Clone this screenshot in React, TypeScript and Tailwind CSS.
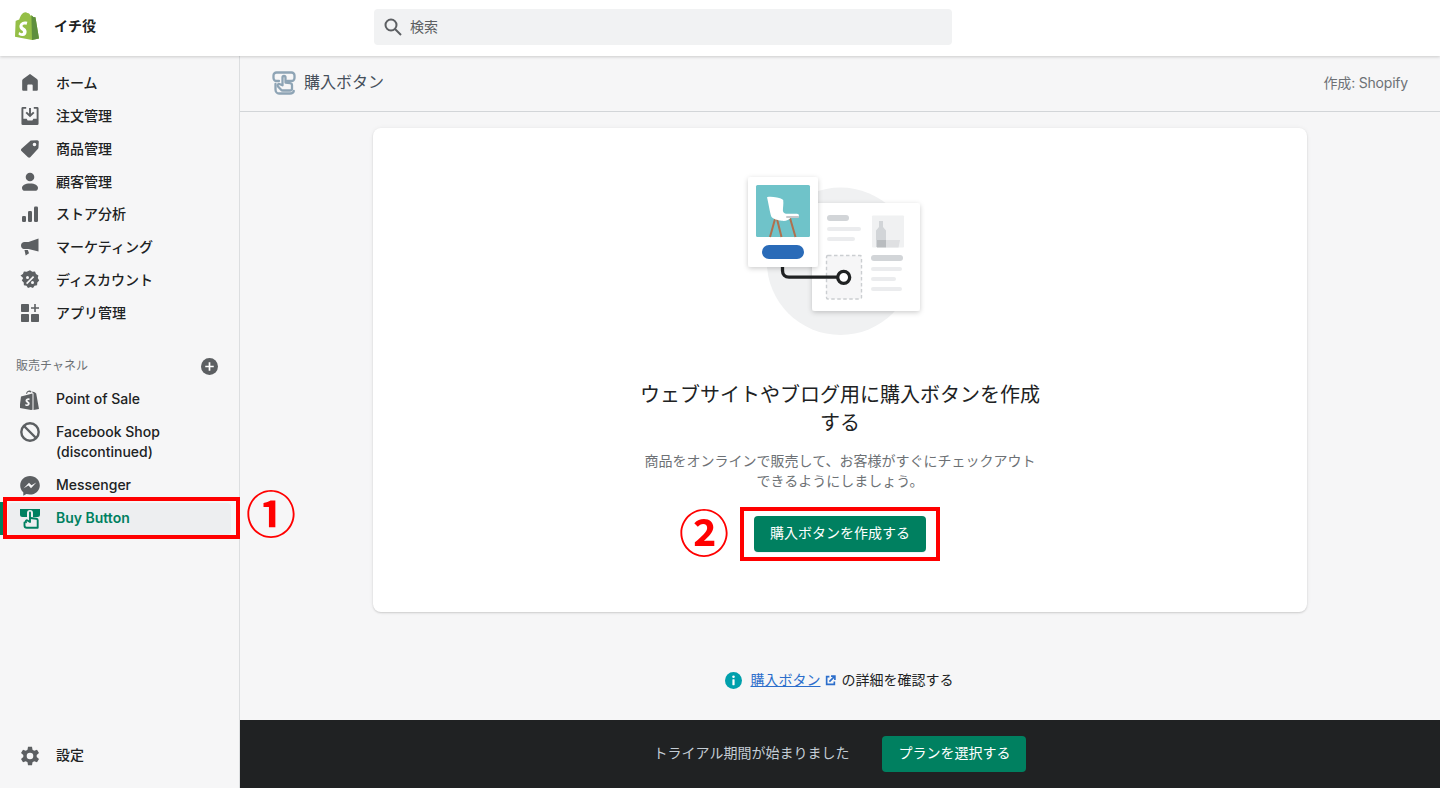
import React from 'react';

const font = { fontFamily: '"Inter", "Noto Sans CJK JP", sans-serif' };

const Icon: React.FC<{ children: React.ReactNode; className?: string }> = ({ children, className }) => (
    <svg viewBox="0 0 20 20" className={className ?? 'w-5 h-5 fill-[#5c5f62]'}>
        {children}
    </svg>
);

const HomeIcon = () => (
    <Icon><path transform="translate(1 .5) scale(.9)" d="M10 .8c-.5 0-.9.2-1.200.5L2.300 6.200C1.500 6.800 1.300 7.500 1.300 8.400V18a1.200 1.200 0 0 0 1.200 1.200H7v-6a1 1 0 0 1 1-1h4a1 1 0 0 1 1 1v6h4.500a1.200 1.200 0 0 0 1.200-1.200V8.400c0-.9-.2-1.600-1-2.200l-6.500-4.900C10.900 1 10.500.8 10 .8z" /></Icon>
);
const OrdersIcon = () => (
    <Icon><g transform="translate(.5 1) scale(.95 .9)"><path fillRule="evenodd" d="M1 1.500A1.500 1.500 0 0 1 2.500 0H6v2H3v11h3.500l1 2h5l1-2H17V2h-3V0h3.500A1.500 1.500 0 0 1 19 1.500v17a1.500 1.500 0 0 1-1.500 1.500h-15A1.500 1.500 0 0 1 1 18.500v-17z" /><path d="M9 1h2v6.600l2.300-2.300 1.400 1.400L10 11.400 5.300 6.700l1.400-1.400L9 7.600V1z" /></g></Icon>
);
const TagIcon = () => (
    <Icon><path transform="translate(1 1) scale(.9)" fillRule="evenodd" d="M11.300.6 18 .2c1 0 1.800.8 1.800 1.800l-.4 6.700c0 .4-.2.800-.5 1.100l-8.600 9.500c-.7.700-1.800.7-2.500 0L.5 12.100c-.7-.7-.7-1.800 0-2.500L10.200 1.100c.3-.3.700-.5 1.100-.5zM15 7a2 2 0 1 0 0-4 2 2 0 0 0 0 4z" /></Icon>
);
const CustomerIcon = () => (
    <Icon><circle cx="10" cy="5" r="4.300" /><path d="M10 11.500c-5 0-8 1.800-8 4.500 0 2 1.500 2.800 3 2.800h10c1.500 0 3-.8 3-2.800 0-2.700-3-4.500-8-4.500z" /></Icon>
);
const AnalyticsIcon = () => (
    <Icon><rect x="2" y="12" width="4" height="6" rx="1.200" /><rect x="8" y="7" width="4" height="11" rx="1.200" /><rect x="14" y="2.500" width="4" height="15.500" rx="1.200" /></Icon>
);
const MarketingIcon = () => (
    <Icon><path d="M18.500 1.500v13l-10-2.500H4l-.1.100C2.500 12 1 10.500 1 8.500 1 6.500 2.500 5 4.500 5h4l10-3.500z" /><path d="M4.500 13h3.300l1.200 3.200-3.300 2.300L4.500 13z" /></Icon>
);
const DiscountIcon = () => (
    <Icon><path fillRule="evenodd" d="M10 .3l2.300 1.500 2.700-.2 1 2.500 2.400 1.400-.6 2.600 1.400 2.400-1.900 2-.2 2.700-2.600.6-1.500 2.300-2.500-1-2.500 1-1.500-2.300-2.600-.6-.2-2.700-1.900-2 1.400-2.400L.5 5.500l2.400-1.400 1-2.500 2.800.2L10 .3zM7.500 9a1.500 1.500 0 1 0 0-3 1.500 1.500 0 0 0 0 3zm5 5a1.500 1.500 0 1 0 0-3 1.500 1.500 0 0 0 0 3zM13 6l-7 7 1.200 1.200 7-7L13 6z" /></Icon>
);
const AppsIcon = () => (
    <Icon><rect x="1" y="1" width="8" height="8" rx=".8" /><rect x="1" y="11" width="8" height="8" rx=".8" /><rect x="11" y="11" width="8" height="8" rx=".8" /><path d="M14.200 1h1.600v3.200H19v1.600h-3.200V9h-1.600V5.800H11V4.200h3.200V1z" /></Icon>
);
const PosIcon = () => (
    <Icon><path fillRule="evenodd" d="M11.500 1.500 14 2l1 .5 1.200 1L19 19l-5.500 1V3.500l-2-2zM12.500 3.500 1 6.500-.5 18l11.500 2 1.500-.3V3.500zM6 3.500C6.500 1.500 8 .5 9.500.5c1 0 1.700.6 2 1.500L10 2.500c-.3-.6-.5-.8-1-.8-.9 0-1.700.8-2 2.300L6 3.500zM8.500 8.200c-1.800 0-3 1.200-3 2.600 0 1.800 2.300 2 2.300 3 0 .4-.3.700-.8.700-.7 0-1.400-.6-1.400-.6l-.4 1.300s.7.800 2 .8c1.500 0 2.500-1 2.500-2.400 0-1.900-2.300-2.100-2.300-3 0-.2.200-.6.800-.6.600 0 1.100.3 1.100.3l.4-1.800s-.4-.3-1.200-.3z" /></Icon>
);
const BanIcon = () => (
    <svg viewBox="0 0 20 20" className="w-5 h-5 fill-none stroke-[#5c5f62]" strokeWidth="2.400">
        <circle cx="10" cy="10" r="8.700" />
        <path d="M4 4l12 12" />
    </svg>
);
const MessengerIcon = () => (
    <Icon><path fillRule="evenodd" d="M10 0C4.500 0 .2 4 .2 9.400c0 2.800 1.200 5.200 3.100 6.900v3.400l3.100-1.700c1.100.3 2.300.5 3.600.5 5.500 0 9.800-4 9.800-9.100C19.800 4 15.500 0 10 0zm1 12.200-2.500-2.600-4.800 2.700 5.300-5.600 2.500 2.600 4.800-2.700-5.300 5.600z" /></Icon>
);
const BuyIcon = () => (
    <svg viewBox="0 0 20 20" className="w-5 h-5">
        <path className="fill-[#008060]" d="M0 0h20v5.500A2.500 2.500 0 0 1 17.500 8H13V4a3 3 0 0 0-6 0v4H2.500A2.500 2.500 0 0 1 0 5.500V0z" />
        <path className="fill-none stroke-[#008060]" strokeWidth="1.900" strokeLinecap="round" strokeLinejoin="round" d="M10 3.500V13L7.500 11.500c-1-.6-2.300.6-1.500 1.700" />
        <path className="fill-none stroke-[#008060]" strokeWidth="1.900" strokeLinecap="round" strokeLinejoin="round" d="M4.500 13.500v3c0 1.200.8 2.300 2.300 2.300h10.900V11.200c0-.8-.5-1.300-1.300-1.400L10.500 9" />
    </svg>
);
const GearIcon = () => (
    <Icon><path fillRule="evenodd" d="M8 0h4l.5 3 1.700 1 2.800-1.100 2 3.400-2.300 1.900v2l2.300 1.900-2 3.400-2.800-1.100-1.700 1-.5 3h-4l-.5-3-1.700-1L3 15.500l-2-3.400 2.300-1.900v-2L1 6.300l2-3.400 2.800 1.100 1.700-1L8 0zm2 12.500a3.300 3.300 0 1 0 0-6.600 3.300 3.300 0 0 0 0 6.600z" transform="translate(0 .8)" /></Icon>
);

const ShopifyLogo = () => (
    <svg viewBox="0 0 24 28" className="w-6 h-7 shrink-0">
        <path fill="#95bf47" d="M20.500 5.400c0-.1-.1-.2-.2-.2l-2-.1-1.500-1.500c-.1-.1-.4-.1-.5 0l-.8.200C15 2.300 14 1 12.400 1h-.2C11.800.4 11.200.2 10.700.2 6.800.2 4.900 5.100 4.300 7.600l-2.700.8c-.8.300-.9.300-1 1.100L0 24.800l17 3.200 7-1.500L20.500 5.400z" />
        <path fill="#5e8e3e" d="M20.300 5.200l-2-.1-1.500-1.500-.4-.1L17 28l7-1.500L20.500 5.400c0-.1-.1-.2-.2-.2z" />
        <path fill="#fff" d="M12.400 9.700l-.9 3.300s-1-.5-2.200-.4c-1.700.1-1.800 1.200-1.800 1.500.1 1.500 3.900 1.800 4.100 5.300.2 2.700-1.400 4.600-3.800 4.700-2.800.2-4.300-1.500-4.300-1.500l.6-2.500s1.500 1.200 2.800 1.100c.8 0 1.100-.7 1.100-1.200-.1-1.900-3.300-1.800-3.500-5-.2-2.700 1.600-5.400 5.400-5.600 1.500-.1 2.500.3 2.500.3z" />
    </svg>
);

const PlusCircle = () => (
    <svg viewBox="0 0 20 20" className="w-[17px] h-[17px] -mr-px">
        <circle cx="10" cy="10" r="10" fill="#5c5f62" />
        <path d="M9 5h2v4h4v2h-4v4H9v-4H5V9h4V5z" fill="#fff" />
    </svg>
);

const InfoIcon = () => (
    <svg viewBox="0 0 20 20" className="w-[17px] h-[17px]">
        <circle cx="10" cy="10" r="10" fill="#00a0ac" />
        <circle cx="10" cy="5.500" r="1.500" fill="#fff" />
        <rect x="8.700" y="8.500" width="2.600" height="7" rx=".5" fill="#fff" />
    </svg>
);

const ExternalIcon = () => (
    <svg viewBox="0 0 20 20" className="w-[11px] h-[11px] fill-none stroke-[#2c6ecb]" strokeWidth="3">
        <path d="M8 3H3v14h14v-5" />
        <path d="M8 12 17 3M11 2h7v7" />
    </svg>
);

const HeaderIcon = () => (
    <svg viewBox="0 0 24 24" className="w-6 h-6 fill-none stroke-[#8ea4b5]" strokeWidth="2.300" strokeLinecap="round" strokeLinejoin="round">
        <path d="M7 10H4.500a3 3 0 0 1-3-3V4.500a3 3 0 0 1 3-3h15a3 3 0 0 1 3 3V7a3 3 0 0 1-3 3H15" />
        <path d="M10.500 6.500a1.500 1.500 0 0 1 3 0v5l4.500.6c1.300.2 2 1 2 2.200v3.200c0 1.300-.8 2-2 2H10.800c-.7 0-1.300-.3-1.700-.8L6 15.500c-1-1.300.3-3 2-2.300l2.500 1V6.500z" />
        <path d="M3.500 13v5.500c0 2.300 1.500 4 3.500 4h11c2 0 3.500-.8 3.800-2.500" />
    </svg>
);

const Illustration = () => (
    <svg viewBox="730 165 220 180" className="w-[220px] h-[180px]">
        <defs>
            <filter id="soft" x="-20%" y="-20%" width="140%" height="140%">
                <feDropShadow dx="0" dy="1.500" stdDeviation="2.500" floodColor="#000" floodOpacity="0.2" />
            </filter>
        </defs>
        <circle cx="840.500" cy="261.300" r="73.700" fill="#f0f1f2" />
        <rect x="812" y="203" width="108" height="108" rx="3" fill="#fff" filter="url(#soft)" />
        <rect x="827" y="215" width="22" height="6" rx="3" fill="#d2d5d8" />
        <rect x="827" y="227" width="34" height="4" rx="2" fill="#ebecee" />
        <rect x="827" y="237" width="28" height="4" rx="2" fill="#ebecee" />
        <rect x="872" y="215.500" width="32" height="32" rx="1" fill="#f0f1f2" />
        <path d="M879 221h4v6l3 3.500V247h-10v-16.500l3-3.500v-6z" fill="#d2d5d8" />
        <path d="M877 240h9v7.500h-9z" fill="#b9bcbf" />
        <path d="M886 240h14l-1.500 7.500H886z" fill="#dfe0e2" />
        <rect x="871" y="255" width="32" height="6" rx="3" fill="#d2d5d8" />
        <rect x="871" y="267" width="31" height="4" rx="2" fill="#ebecee" />
        <rect x="871" y="277" width="25" height="4" rx="2" fill="#ebecee" />
        <rect x="871" y="287" width="31" height="4" rx="2" fill="#ebecee" />
        <rect x="826.500" y="255.500" width="35" height="43.500" rx="1.500" fill="#f6f6f7" stroke="#cbced1" strokeWidth="1.400" strokeDasharray="3.500 2.500" />
        <path d="M782.500 266v4.500c0 4 2.500 6.700 6.500 6.700h48" fill="none" stroke="#202223" strokeWidth="3.300" />
        <circle cx="843.700" cy="277.300" r="6" fill="#fff" stroke="#202223" strokeWidth="3.300" />
        <rect x="748" y="177" width="70" height="90" rx="3" fill="#fff" filter="url(#soft)" />
        <rect x="756" y="185" width="54" height="52" rx="1.500" fill="#6fc3c9" />
        <g fill="none" stroke="#b0704e" strokeWidth="2">
            <path d="M775 219l-5 18M777 219l4.500 18M790 218l5.500 19" />
        </g>
        <path d="M767 197.200c3-.7 6-.3 10 .3 3 .5 5 1.300 6.200 2.500.5 4-.3 8-.3 10.500 0 1.500 1 3 3 3.200h11c1.300 0 2 .7 2 1.800 0 1.200-.7 2-2 2h-6c-2 2.500-5 3.800-9 3.300-4.500-.5-9-1.800-10.500-4-1.500-4.500-3-14-4.400-19.600z" fill="#fff" />
        <rect x="786" y="216" width="13" height="2" rx="1" fill="#c4c7ca" />
        <rect x="762" y="245" width="42" height="14" rx="7" fill="#2a6bb8" />
    </svg>
);

type NavItem = { label: string; icon: React.ReactNode };

const mainNav: NavItem[] = [
    { label: 'ホーム', icon: <HomeIcon /> },
    { label: '注文管理', icon: <OrdersIcon /> },
    { label: '商品管理', icon: <TagIcon /> },
    { label: '顧客管理', icon: <CustomerIcon /> },
    { label: 'ストア分析', icon: <AnalyticsIcon /> },
    { label: 'マーケティング', icon: <MarketingIcon /> },
    { label: 'ディスカウント', icon: <DiscountIcon /> },
    { label: 'アプリ管理', icon: <AppsIcon /> },
];

const NavRow: React.FC<NavItem> = ({ label, icon }) => (
    <div className="flex items-center h-[33px] pl-5">
        <span className="w-9 shrink-0">{icon}</span>
        <span className="mb-[2px] text-sm font-medium text-[#202223]">{label}</span>
    </div>
);

export default function App() {
    return (
        <div style={font} className="relative w-[1440px] h-[788px] overflow-hidden flex flex-col bg-[#f6f6f7]">
            {/* Top bar */}
            <header className="relative z-10 h-14 shrink-0 bg-white flex items-center shadow-[0_1px_3px_rgba(0,0,0,0.18)]">
                <div className="w-[374px] shrink-0 flex items-center pl-[15px] gap-[15px] mb-[4px]">
                    <ShopifyLogo />
                    <span className="text-sm font-semibold text-[#202223]">イチ役</span>
                </div>
                <div className="w-[578px] h-9 mb-[2px] rounded bg-[#f1f2f3] flex items-center pl-[9px] gap-[7px]">
                    <svg viewBox="0 0 20 20" className="w-5 h-5 fill-none stroke-[#5c5f62]" strokeWidth="2">
                        <circle cx="8" cy="8" r="5.500" />
                        <path d="M12 12l6 6" />
                    </svg>
                    <span className="text-sm text-[#5c5f62]">検索</span>
                </div>
            </header>

            <div className="flex-1 flex min-h-0">
                {/* Sidebar */}
                <aside className="w-[240px] shrink-0 flex flex-col border-r border-[#dcdee0] pt-[10.5px] pb-[16px]">
                    {mainNav.map(item => (
                        <div key={item.label} className="flex items-center h-[32.86px] pl-5">
                            <span className="w-9 shrink-0">{item.icon}</span>
                            <span className="text-sm font-medium text-[#202223]">{item.label}</span>
                        </div>
                    ))}

                    <div className="flex items-center justify-between h-[20px] mt-[26.7px] pl-4 pr-[22px] text-xs text-[#6d7175]">
                        <span>販売チャネル</span>
                        <PlusCircle />
                    </div>

                    <div className="mt-[7px]">
                        <NavRow label="Point of Sale" icon={<PosIcon />} />
                        <div className="flex items-start pl-5 pt-[6px] pb-[6px] h-[53px]">
                            <span className="w-9 shrink-0"><BanIcon /></span>
                            <span className="text-sm font-medium text-[#202223] leading-5">Facebook Shop<br />(discontinued)</span>
                        </div>
                        <NavRow label="Messenger" icon={<MessengerIcon />} />
                        <div className="relative h-[33px] flex items-center">
                            <span className="absolute left-0 top-0 bottom-0 w-[3px] bg-[#008060]" />
                            <div className="ml-2 w-[223px] h-8 rounded bg-[#edeef0] flex items-center pl-3">
                                <span className="w-9 shrink-0"><BuyIcon /></span>
                                <span className="mb-[2px] text-sm font-semibold text-[#008060]">Buy Button</span>
                            </div>
                        </div>
                    </div>

                    <div className="mt-auto">
                        <NavRow label="設定" icon={<GearIcon />} />
                    </div>
                </aside>

                {/* Main */}
                <main className="flex-1 min-w-0 flex flex-col">
                    <div className="h-[56px] shrink-0 flex items-center justify-between pl-8 pr-8 pb-[2px] border-b border-[#d2d5d8]">
                        <div className="flex items-center gap-2">
                            <HeaderIcon />
                            <span className="mb-[1px] text-base text-[#454f5b]">購入ボタン</span>
                        </div>
                        <span className="text-sm tracking-[-0.2px] text-[#6d7175]">作成: Shopify</span>
                    </div>

                    <div className="flex-1 flex flex-col items-center pt-4">
                        <section className="w-[934px] h-[484px] rounded-lg bg-white shadow-[0_0_5px_rgba(23,24,24,0.05),0_1px_2px_rgba(0,0,0,0.15)] flex flex-col items-center pt-[37px]">
                            <Illustration />
                            <h2 className="mt-[36px] w-[410px] text-center text-xl leading-7 text-[#202223]">
                                ウェブサイトやブログ用に購入ボタンを作成する
                            </h2>
                            <p className="mt-[14px] w-[400px] text-center text-sm leading-5 text-[#6d7175]">
                                商品をオンラインで販売して、お客様がすぐにチェックアウトできるようにしましょう。
                            </p>
                            <button className="mt-[25px] w-[172px] h-9 pb-[2px] rounded bg-[#008060] text-sm text-white shadow-[0_1px_0_rgba(0,0,0,0.05)]">
                                購入ボタンを作成する
                            </button>
                        </section>

                        <div className="mt-[58px] pr-[2px] flex items-center h-5 text-sm text-[#202223]">
                            <InfoIcon />
                            <a className="ml-[9px] text-[#2c6ecb] underline">購入ボタン</a>
                            <span className="ml-1"><ExternalIcon /></span>
                            <span className="ml-[6px]">の詳細を確認する</span>
                        </div>
                    </div>

                    <div className="h-[68px] shrink-0 bg-[#202223] flex items-center justify-center gap-[33px]">
                        <span className="mb-[2px] text-sm text-[#c4cdd5]">トライアル期間が始まりました</span>
                        <button className="w-[144px] h-9 pb-[2px] rounded bg-[#008060] text-sm text-white">プランを選択する</button>
                    </div>
                </main>
            </div>

            {/* Red annotations drawn over the screenshot */}
            <div className="absolute left-[3px] top-[497px] w-[237px] h-[42px] border-4 border-[#ff0000]" />
            <div className="absolute left-[740px] top-[507px] w-[200px] h-[54px] border-4 border-[#ff0000]" />
            <span className="absolute left-[246px] top-[487px] w-[50px] h-[48px] flex items-center justify-center text-[50px] leading-none font-bold text-[#ff0000] font-['Noto_Sans_CJK_JP']">①</span>
            <span className="absolute left-[679px] top-[506px] w-[50px] h-[48px] flex items-center justify-center text-[50px] leading-none font-bold text-[#ff0000] font-['Noto_Sans_CJK_JP']">②</span>
        </div>
    );
}
